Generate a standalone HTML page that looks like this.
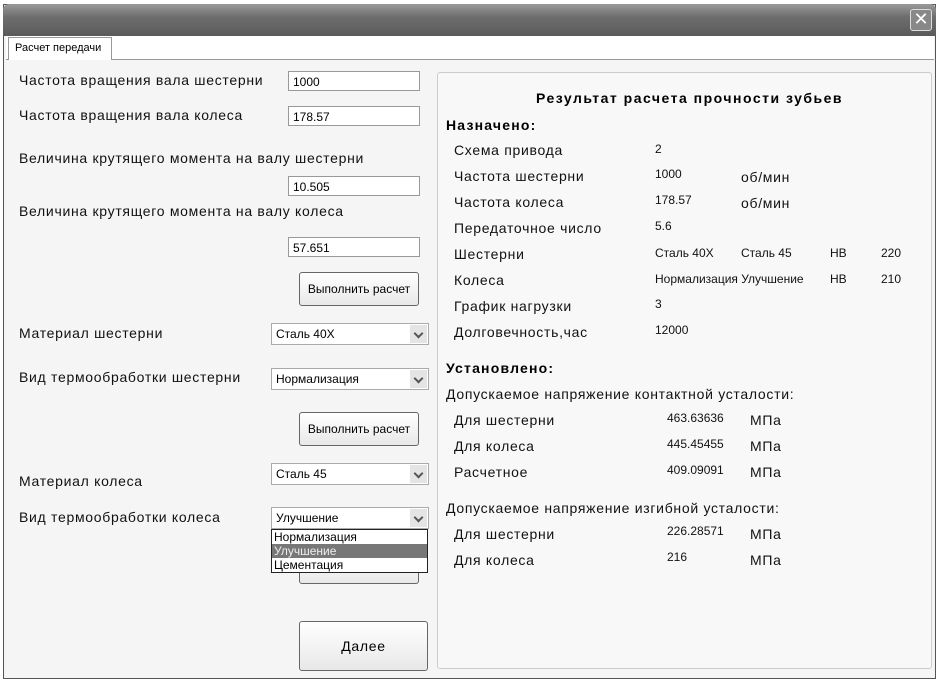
<html><head><style>
body{margin:0;width:939px;height:681px;background:#fff;font-family:"Liberation Sans",sans-serif;position:relative;overflow:hidden}
.a{position:absolute;white-space:nowrap}
.l{font-size:14px;color:#111;letter-spacing:0.7px}
.s{font-size:12px;color:#111}
.in{position:absolute;background:#fff;border:1px solid #999;height:20px;font-size:12px;line-height:20px;padding-left:4px;box-sizing:border-box}
.cb{position:absolute;background:#fff;border:1px solid #aaa;height:22px;font-size:12px;line-height:21px;padding-left:4px;box-sizing:border-box;width:158px}
.cb:after{content:"";position:absolute;right:1px;top:1px;width:17px;height:18px;background:#e4e4e4}
.cb i{position:absolute;right:6px;top:6px;width:5px;height:5px;border-right:2px solid #555;border-bottom:2px solid #555;transform:rotate(45deg);z-index:2}
.bt{position:absolute;border:1px solid #666;border-radius:3px;background:linear-gradient(#fff,#e8e8e8);font-size:12px;text-align:center;box-sizing:border-box}
.b{font-size:14px;font-weight:bold;letter-spacing:1.2px}
</style></head><body>
<div class="a" style="left:3px;top:4px;width:933px;height:675px;background:#f3f3f3;border:1px solid #555;box-sizing:border-box"></div>
<div class="a" style="left:3px;top:4px;width:933px;height:32px;background:linear-gradient(#9a9a9a,#6e6e6e 40%,#5a5a5a);border-radius:6px 6px 0 0"></div>
<div class="a" style="left:910px;top:9px;width:20px;height:20px;border:1px solid #ddd;border-radius:3px;background:#888;color:#fff;font-size:18px;line-height:19px;text-align:center">✕</div>
<div class="a" style="left:6px;top:36px;width:928px;height:23px;background:#fff;border-bottom:1px solid #999"></div>
<div class="a" style="left:8px;top:37px;width:104px;height:23px;background:#fff;border:1px solid #999;border-bottom:none;font-size:11px;line-height:20px;padding-left:6px;box-sizing:border-box">Расчет передачи</div>
<div class="a" style="left:6px;top:60px;width:928px;height:617px;background:#f5f5f5"></div>

<div class="a l" style="left:19px;top:72px">Частота вращения вала шестерни</div>
<div class="in" style="left:288px;top:71px;width:132px">1000</div>
<div class="a l" style="left:19px;top:107px">Частота вращения вала колеса</div>
<div class="in" style="left:288px;top:106px;width:132px">178.57</div>
<div class="a l" style="left:19px;top:150px">Величина крутящего момента на валу шестерни</div>
<div class="in" style="left:288px;top:176px;width:132px">10.505</div>
<div class="a l" style="left:19px;top:203px">Величина крутящего момента на валу колеса</div>
<div class="in" style="left:288px;top:237px;width:132px">57.651</div>
<div class="bt" style="left:299px;top:272px;width:120px;height:34px;line-height:32px">Выполнить расчет</div>
<div class="a l" style="left:19px;top:325px">Материал шестерни</div>
<div class="cb" style="left:271px;top:323px">Сталь 40Х<i></i></div>
<div class="a l" style="left:19px;top:369px">Вид термообработки шестерни</div>
<div class="cb" style="left:271px;top:368px">Нормализация<i></i></div>
<div class="bt" style="left:299px;top:412px;width:120px;height:34px;line-height:32px">Выполнить расчет</div>
<div class="a l" style="left:19px;top:473px">Материал колеса</div>
<div class="cb" style="left:271px;top:463px">Сталь 45<i></i></div>
<div class="a l" style="left:19px;top:509px">Вид термообработки колеса</div>
<div class="cb" style="left:271px;top:507px">Улучшение<i></i></div>
<div class="bt" style="left:299px;top:556px;width:120px;height:28px"></div>
<div class="a" style="left:271px;top:529px;width:157px;height:44px;background:#fff;border:1px solid #222;box-sizing:border-box;font-size:12px;line-height:14px">
<div style="padding-left:2px">Нормализация</div><div style="padding-left:2px;background:#777;color:#eee">Улучшение</div><div style="padding-left:2px">Цементация</div></div>
<div class="bt" style="left:299px;top:621px;width:129px;height:50px;line-height:48px;font-size:14px;letter-spacing:0.7px">Далее</div>

<div class="a" style="left:437px;top:72px;width:495px;height:597px;background:#f8f8f8;border:1px solid #ccc;border-radius:3px;box-sizing:border-box"></div>
<div class="a b" style="left:536px;top:90px;letter-spacing:1.5px">Результат расчета прочности зубьев</div>
<div class="a b" style="left:446px;top:117px">Назначено:</div>
<div class="a l" style="left:454px;top:142px">Схема привода</div><div class="a s" style="left:655px;top:142px">2</div>
<div class="a l" style="left:454px;top:168px">Частота шестерни</div><div class="a s" style="left:655px;top:167px">1000</div><div class="a l" style="left:741px;top:169px">об/мин</div>
<div class="a l" style="left:454px;top:194px">Частота колеса</div><div class="a s" style="left:655px;top:193px">178.57</div><div class="a l" style="left:741px;top:195px">об/мин</div>
<div class="a l" style="left:454px;top:220px">Передаточное число</div><div class="a s" style="left:655px;top:219px">5.6</div>
<div class="a l" style="left:454px;top:246px">Шестерни</div><div class="a s" style="left:655px;top:246px">Сталь 40Х</div><div class="a s" style="left:741px;top:246px">Сталь 45</div><div class="a s" style="left:830px;top:246px">НВ</div><div class="a s" style="left:881px;top:246px">220</div>
<div class="a l" style="left:454px;top:272px">Колеса</div><div class="a s" style="left:655px;top:272px">Нормализация Улучшение</div><div class="a s" style="left:830px;top:272px">НВ</div><div class="a s" style="left:881px;top:272px">210</div>
<div class="a l" style="left:454px;top:298px">График нагрузки</div><div class="a s" style="left:655px;top:297px">3</div>
<div class="a l" style="left:454px;top:324px">Долговечность,час</div><div class="a s" style="left:655px;top:323px">12000</div>
<div class="a b" style="left:446px;top:360px">Установлено:</div>
<div class="a l" style="left:446px;top:386px">Допускаемое напряжение контактной усталости:</div>
<div class="a l" style="left:454px;top:412px">Для шестерни</div><div class="a s" style="left:667px;top:411px">463.63636</div><div class="a l" style="left:750px;top:412px">МПа</div>
<div class="a l" style="left:454px;top:438px">Для колеса</div><div class="a s" style="left:667px;top:437px">445.45455</div><div class="a l" style="left:750px;top:438px">МПа</div>
<div class="a l" style="left:454px;top:464px">Расчетное</div><div class="a s" style="left:667px;top:463px">409.09091</div><div class="a l" style="left:750px;top:464px">МПа</div>
<div class="a l" style="left:446px;top:500px">Допускаемое напряжение изгибной усталости:</div>
<div class="a l" style="left:454px;top:526px">Для шестерни</div><div class="a s" style="left:667px;top:524px">226.28571</div><div class="a l" style="left:750px;top:526px">МПа</div>
<div class="a l" style="left:454px;top:552px">Для колеса</div><div class="a s" style="left:667px;top:550px">216</div><div class="a l" style="left:750px;top:552px">МПа</div>
</body></html>
